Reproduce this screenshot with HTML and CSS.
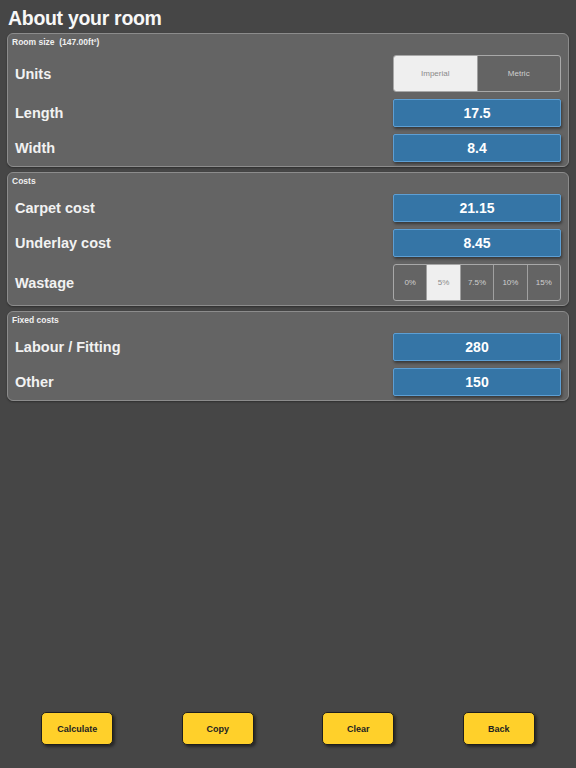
FILE: index.html
```html
<!DOCTYPE html>
<html lang="en">
<head>
<meta charset="utf-8">
<title>About your room</title>
<link rel="stylesheet" href="styles.css">
</head>
<body>
<div class="page">
  <h1 class="title">About your room</h1>

  <section class="panel">
    <div class="panel-head">Room size&nbsp; (147.00ft²)</div>
    <div class="row row-seg">
      <span class="label">Units</span>
      <div class="seg">
        <span class="seg-item is-on">Imperial</span>
        <span class="seg-item">Metric</span>
      </div>
    </div>
    <div class="row">
      <span class="label">Length</span>
      <div class="num">17.5</div>
    </div>
    <div class="row">
      <span class="label">Width</span>
      <div class="num">8.4</div>
    </div>
  </section>

  <section class="panel">
    <div class="panel-head">Costs</div>
    <div class="row">
      <span class="label">Carpet cost</span>
      <div class="num">21.15</div>
    </div>
    <div class="row">
      <span class="label">Underlay cost</span>
      <div class="num">8.45</div>
    </div>
    <div class="row row-seg">
      <span class="label">Wastage</span>
      <div class="seg">
        <span class="seg-item">0%</span>
        <span class="seg-item is-on">5%</span>
        <span class="seg-item">7.5%</span>
        <span class="seg-item">10%</span>
        <span class="seg-item">15%</span>
      </div>
    </div>
  </section>

  <section class="panel">
    <div class="panel-head">Fixed costs</div>
    <div class="row">
      <span class="label">Labour / Fitting</span>
      <div class="num">280</div>
    </div>
    <div class="row">
      <span class="label">Other</span>
      <div class="num">150</div>
    </div>
  </section>

  <footer class="actions">
    <div class="action-cell"><button class="btn">Calculate</button></div>
    <div class="action-cell"><button class="btn">Copy</button></div>
    <div class="action-cell"><button class="btn">Clear</button></div>
    <div class="action-cell"><button class="btn">Back</button></div>
  </footer>
</div>
</body>
</html>
```

FILE: styles.css
```css
* { box-sizing: border-box; }

html, body {
  margin: 0;
  padding: 0;
  background: #464646;
}

body {
  font-family: "Liberation Sans", Arial, sans-serif;
  color: #f2f2f2;
}

.page {
  min-height: 768px;
  display: flex;
  flex-direction: column;
  padding: 0 7px;
}

.title {
  margin: 0;
  padding: 4px 0 0 1px;
  font-size: 19.5px;
  line-height: 29px;
  font-weight: bold;
  letter-spacing: -0.3px;
  color: #f7f7f7;
}

.panel {
  background: #646464;
  border: 1px solid #8c8c8c;
  border-radius: 6px;
  padding: 0 7px 4px 7px;
  margin-bottom: 5px;
  box-shadow: 0 1px 2px rgba(0,0,0,0.35);
}

.panel-head {
  height: 21px;
  padding: 3px 0 0 0;
  margin-left: -3px;
  font-size: 8.5px;
  line-height: 11px;
  font-weight: bold;
  color: #f0f0f0;
}

.row {
  display: flex;
  align-items: center;
  justify-content: space-between;
  height: 28px;
  margin-bottom: 7px;
}

.row:last-child { margin-bottom: 0; }

.row-seg { height: 37px; }

.label {
  font-size: 14.5px;
  font-weight: bold;
  color: #f2f2f2;
}

.num {
  width: 168px;
  height: 28px;
  background: #3575a6;
  border: 1px solid #5d9fd4;
  border-radius: 2px;
  box-shadow: 1px 2px 3px rgba(0,0,0,0.45);
  display: flex;
  align-items: center;
  justify-content: center;
  font-size: 14px;
  font-weight: bold;
  color: #ffffff;
}

.seg {
  width: 168px;
  height: 37px;
  display: flex;
  border: 1px solid #a8a8a8;
  border-radius: 3px;
  overflow: hidden;
}

.seg-item {
  flex: 1;
  display: flex;
  align-items: center;
  justify-content: center;
  font-size: 8px;
  color: #cfcfcf;
  border-left: 1px solid #a0a0a0;
}

.seg-item:first-child { border-left: none; }

.seg-item.is-on {
  background: #efefef;
  color: #8a8a8a;
}

.actions {
  margin-top: auto;
  display: grid;
  grid-template-columns: repeat(4, 1fr);
  padding-bottom: 23px;
}

.action-cell {
  display: flex;
  justify-content: center;
}

.btn {
  width: 72px;
  height: 33px;
  background: #ffd02a;
  border: 1.5px solid #1e1e1e;
  border-radius: 5px;
  box-shadow: 2px 2px 3px rgba(0,0,0,0.45);
  font-family: "Liberation Sans", Arial, sans-serif;
  font-size: 9px;
  font-weight: bold;
  color: #222;
  padding: 0;
}
```
